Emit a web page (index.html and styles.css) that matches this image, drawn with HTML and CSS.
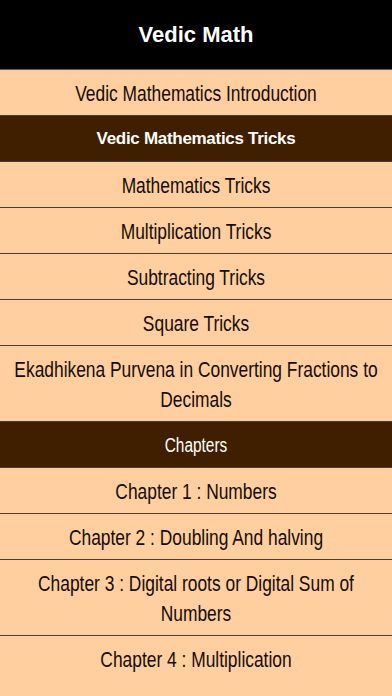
FILE: index.html
```html
<!DOCTYPE html>
<html>
<head>
<meta charset="utf-8">
<link rel="stylesheet" href="styles.css">
</head>
<body>
<div class="app">
  <header class="title-bar">Vedic Math</header>
  <ul class="menu">
    <li class="item"><div class="label">Vedic Mathematics Introduction</div></li>
    <li class="section">Vedic Mathematics Tricks</li>
    <li class="item"><div class="label">Mathematics Tricks</div></li>
    <li class="item"><div class="label">Multiplication Tricks</div></li>
    <li class="item"><div class="label">Subtracting Tricks</div></li>
    <li class="item"><div class="label">Square Tricks</div></li>
    <li class="item"><div class="label">Ekadhikena Purvena in Converting Fractions to Decimals</div></li>
    <li class="section plain"><div class="label">Chapters</div></li>
    <li class="item"><div class="label">Chapter 1 : Numbers</div></li>
    <li class="item"><div class="label">Chapter 2 : Doubling And halving</div></li>
    <li class="item"><div class="label">Chapter 3 : Digital roots or Digital Sum of Numbers</div></li>
    <li class="item last"><div class="label">Chapter 4 : Multiplication</div></li>
  </ul>
</div>
</body>
</html>
```
FILE: styles.css
```css
html, body {
  margin: 0;
  padding: 0;
  background: #ffcf9f;
}
.app {
  width: 392px;
  height: 696px;
  overflow: hidden;
  background: #ffcf9f;
  font-family: "Liberation Sans", Arial, sans-serif;
}
.title-bar {
  height: 69px;
  background: #000;
  color: #fff;
  font-weight: bold;
  font-size: 22px;
  display: flex;
  align-items: center;
  justify-content: center;
  border-bottom: 1px solid #6b5a48;
}
.menu {
  list-style: none;
  margin: 0;
  padding: 0;
}
.menu li {
  text-align: center;
  padding: 9px 8px 6px;
  line-height: 30px;
  border-bottom: 1px solid #4a4038;
}
.label {
  width: 125%;
  margin-left: -12.5%;
  transform: scaleX(0.79);
  transform-origin: 50% 50%;
}
.item {
  color: #140d05;
  font-size: 22px;
  background: #ffcf9f;
}
.menu .section {
  background: #3f1f00;
  color: #fff;
  font-weight: bold;
  font-size: 17px;
  letter-spacing: -0.3px;
  padding-top: 8px;
  padding-bottom: 7px;
}
.menu .section.plain {
  font-weight: normal;
  font-size: 19.5px;
  letter-spacing: 0;
}
.menu .last {
  border-bottom: none;
}
```
